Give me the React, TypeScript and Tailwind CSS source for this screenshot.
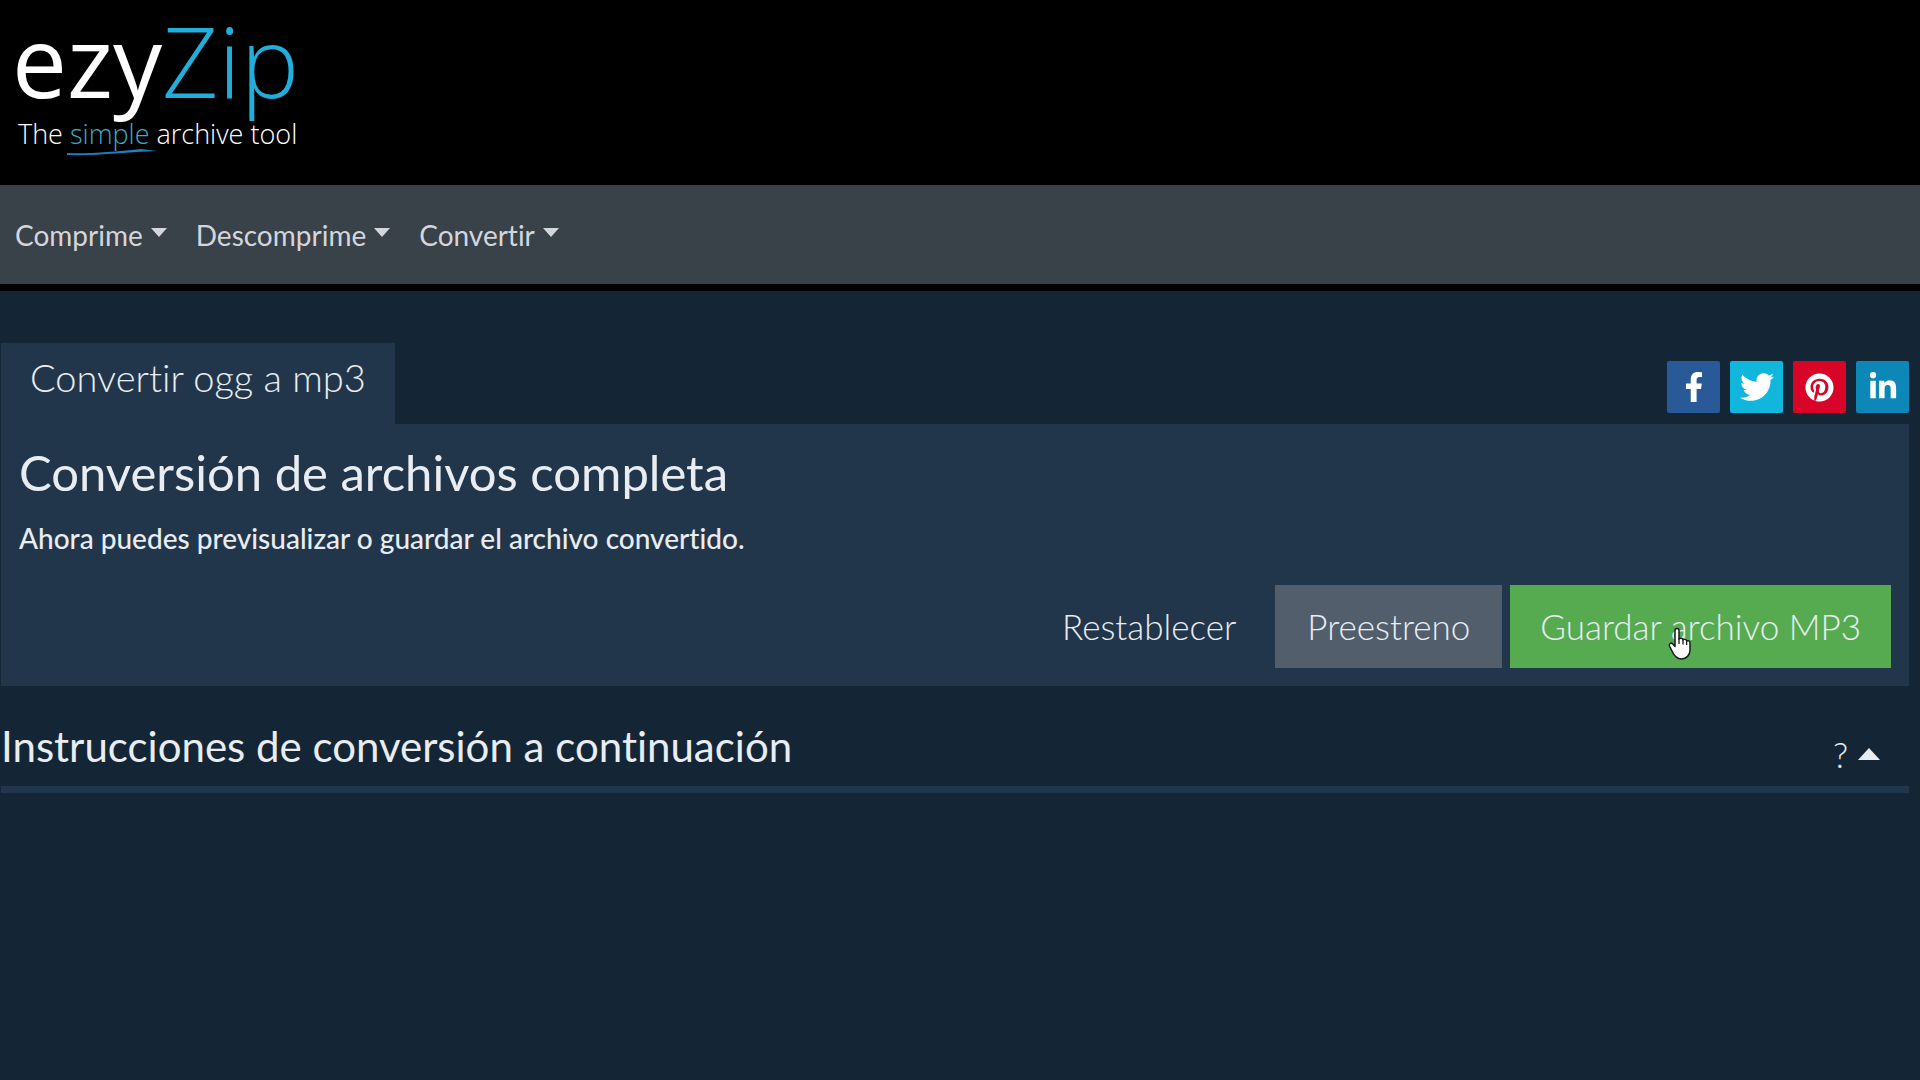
import { FaFacebookF, FaLinkedinIn, FaPinterest, FaTwitter } from "react-icons/fa";

const menus = ["Comprime", "Descomprime", "Convertir"];

const socials = [
  { name: "Facebook", Icon: FaFacebookF, color: "bg-[#295a97]", size: "size-[30px]" },
  { name: "Twitter", Icon: FaTwitter, color: "bg-[#10b6dc]", size: "size-[34px]" },
  { name: "Pinterest", Icon: FaPinterest, color: "bg-[#d90528]", size: "size-[29px]" },
  { name: "LinkedIn", Icon: FaLinkedinIn, color: "bg-[#0c87b8]", size: "size-[30px]" },
];

const Logo = () => (
  <a href="#" className="block w-fit pt-2 pl-3 font-['Open_Sans',sans-serif] text-white">
    <div className="text-[98px] leading-[104px]">
      ezy<span className="font-light text-[#22aedb]">Zip</span>
    </div>
    <div className="mt-[6px] pl-[6px] text-[27px] leading-8 font-light">
      The{" "}
      <span className="relative text-[#3fa9c9]">
        simple
        <svg width="92" height="8" viewBox="0 0 92 8" className="absolute -bottom-1 -left-1">
          <path d="M1 5C23 6 45 4 75 1L91 3C60 4 30 8 1 7Z" fill="#1f7fc4" />
        </svg>
      </span>{" "}
      archive tool
    </div>
  </a>
);

const Navbar = () => (
  <nav className="flex h-[106px] items-center gap-[29px] border-b-[7px] border-black bg-[#394149] px-[15px]">
    {menus.map((label) => (
      <button key={label} type="button" className="flex items-center gap-2 text-[28px] leading-10 text-[#d3d6dc]">
        {label}
        <svg width="16" height="9" viewBox="0 0 16 9" className="mb-1" fill="currentColor">
          <path d="M0 0h16L8 9z" />
        </svg>
      </button>
    ))}
  </nav>
);

const HandCursor = () => (
  <svg width="24" height="34" viewBox="0 0 24 34" className="absolute top-[42px] left-[158px]">
    <path
      d="M7 3.5C7 .8 11 .8 11 3.5V12c1-1.4 3.6-1 4 .8 1.2-1 3.4-.5 3.6 1.2 1.4-.8 3.4 0 3.4 2V23c0 5-3.6 9-8.500 9-5 0-7.500-3.500-9.500-8L1.500 19c-.8-2.500 1.800-3.800 3.300-2L7 19.500z"
      fill="#fff"
      stroke="#1b1b1b"
      strokeWidth="1.500"
      strokeLinejoin="round"
    />
    <path d="M11 11v6M15 12.500v5M18.600 14v4" stroke="#1b1b1b" strokeWidth="1.300" />
  </svg>
);

const App = () => {
  return (
    <div className="min-h-screen bg-[#142635] font-['Lato',sans-serif] text-[#e9edf2] [font-variant-ligatures:none]">
      <header className="h-[185px] bg-black">
        <Logo />
      </header>
      <Navbar />

      <main className="pt-[52px] pr-[11px] pl-px">
        <div className="flex items-start justify-between">
          <h2 className="h-[81px] bg-[#22364b] px-[29px] pt-[10px] text-[38px] leading-[48px] font-light">
            Convertir ogg a mp3
          </h2>
          <div className="flex gap-[10px] pt-[18px]">
            {socials.map(({ name, Icon, color, size }) => (
              <a
                key={name}
                href="#"
                aria-label={name}
                className={`flex h-[52px] w-[53px] items-center justify-center rounded-xs text-white ${color}`}
              >
                <Icon className={size} />
              </a>
            ))}
          </div>
        </div>

        <section className="bg-[#22364b] px-[18px] pt-[18px] pb-[18px]">
          <h1 className="text-[49px] leading-[60px]">Conversión de archivos completa</h1>
          <p className="mt-4 text-[28px] leading-10 font-medium">
            Ahora puedes previsualizar o guardar el archivo convertido.
          </p>
          <div className="mt-[27px] flex justify-end gap-2 text-[35px] font-light">
            <button type="button" className="h-[83px] px-[31px]">
              Restablecer
            </button>
            <button type="button" className="h-[83px] bg-[#525e6c] px-8">
              Preestreno
            </button>
            <button type="button" className="relative h-[83px] bg-[#56ab51] px-[30px]">
              Guardar archivo MP3
              <HandCursor />
            </button>
          </div>
        </section>

        <section className="mt-8 flex items-center justify-between border-b-[7px] border-[#22364b] pb-3">
          <h2 className="text-[42px] leading-[56px]">Instrucciones de conversión a continuación</h2>
          <button type="button" aria-label="Ayuda" className="mt-4 mr-[29px] flex items-center gap-[10px] text-[35px] leading-10 font-light">
            ?
            <svg width="22" height="12" viewBox="0 0 22 12" fill="currentColor">
              <path d="M0 12h22L11 0z" />
            </svg>
          </button>
        </section>
      </main>
    </div>
  );
};

export default App;
